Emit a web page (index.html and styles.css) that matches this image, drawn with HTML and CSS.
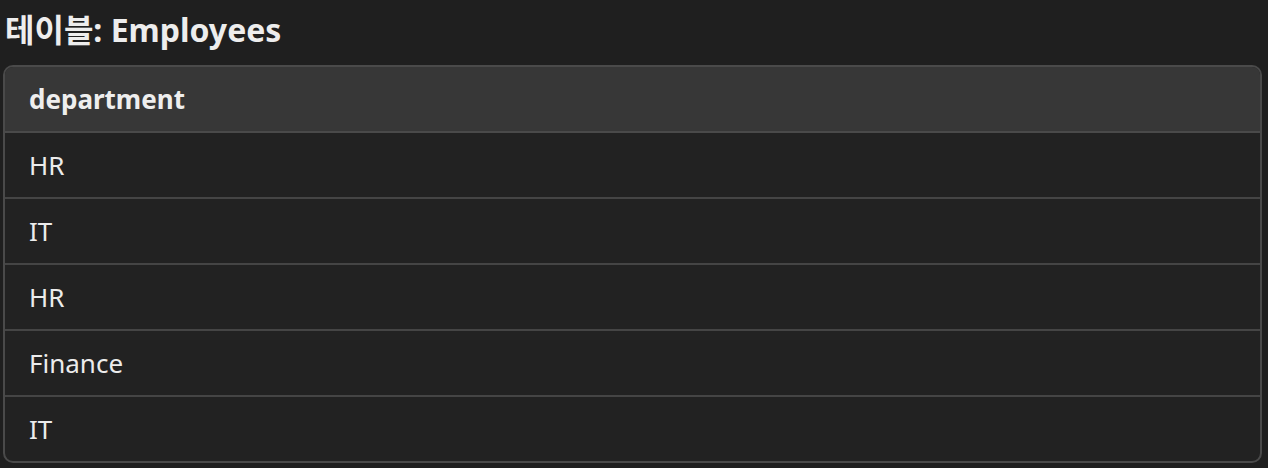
FILE: index.html
```html
<!DOCTYPE html>
<html lang="ko">
<head>
<meta charset="utf-8">
<link rel="stylesheet" href="styles.css">
</head>
<body>
<h2 class="title">테이블: Employees</h2>
<div class="table-wrap">
  <table class="grid">
    <thead>
      <tr><th>department</th></tr>
    </thead>
    <tbody>
      <tr><td>HR</td></tr>
      <tr><td>IT</td></tr>
      <tr><td>HR</td></tr>
      <tr><td>Finance</td></tr>
      <tr><td>IT</td></tr>
    </tbody>
  </table>
</div>
</body>
</html>
```
FILE: styles.css
```css
html, body {
  margin: 0;
  background: #1f1f1f;
}
body {
  padding: 0 6px 0 3px;
  font-family: "Noto Sans", "Noto Sans CJK KR", sans-serif;
  color: #ececec;
}
.title {
  margin: 0;
  padding: 10px 0 0 2px;
  height: 65px;
  box-sizing: border-box;
  font-size: 32px;
  font-weight: 700;
  line-height: 40px;
  color: #ededed;
}
.table-wrap {
  border: 2px solid #4a4a4a;
  border-radius: 10px;
  overflow: hidden;
  background: #222222;
}
.grid {
  width: 100%;
  border-collapse: collapse;
}
.grid th, .grid td {
  height: 66px;
  padding: 0 24px;
  text-align: left;
  font-size: 26px;
  box-sizing: border-box;
  vertical-align: middle;
}
.grid th {
  height: 65px;
  background: #373737;
  font-weight: 700;
  color: #eeeeee;
  border-bottom: 2px solid #4a4a4a;
}
.grid td {
  font-weight: 400;
  color: #ececec;
  border-bottom: 2px solid #454545;
}
.grid tbody tr:last-child td {
  height: 65px;
  border-bottom: none;
}
```
